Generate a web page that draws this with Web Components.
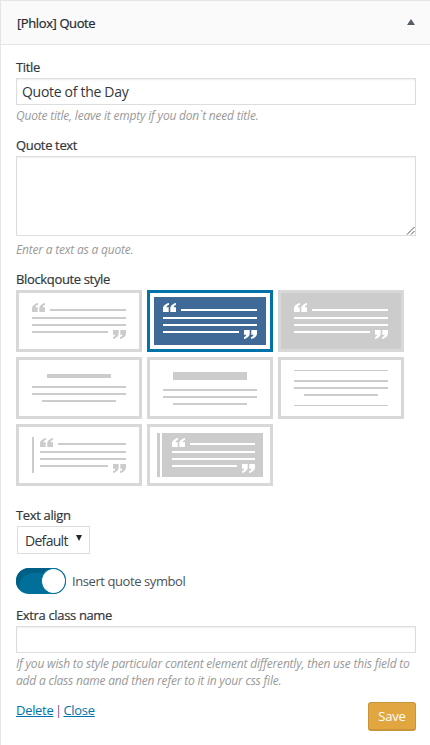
<!DOCTYPE html>
<html>
<head>
<meta charset="utf-8">
<title>[Phlox] Quote</title>
<style>
    html, body { margin: 0; padding: 0; background: #fff; }
    body { font-family: "Open Sans", "Liberation Sans", sans-serif; font-size: 13px; color: #32373c; height: 745px; overflow: hidden; }
</style>
</head>
<body>
<widget-panel heading="[Phlox] Quote">
    <form-field label="Title" hint="Quote title, leave it empty if you don`t need title." gap="12">
        <text-box>Quote of the Day</text-box>
    </form-field>
    <form-field label="Quote text" hint="Enter a text as a quote." hint-gap="5" gap="12">
        <text-box multiline></text-box>
    </form-field>
    <form-field label="Blockqoute style" gap="20">
        <style-picker>
            <style-tile variant="quote"></style-tile>
            <style-tile variant="quote" state="selected"></style-tile>
            <style-tile variant="quote" state="filled"></style-tile>
            <style-tile variant="heading"></style-tile>
            <style-tile variant="heading-large"></style-tile>
            <style-tile variant="ruled"></style-tile>
            <style-tile variant="side"></style-tile>
            <style-tile variant="side-filled"></style-tile>
        </style-picker>
    </form-field>
    <form-field label="Text align" gap="14">
        <select-box>Default</select-box>
    </form-field>
    <toggle-row>Insert quote symbol</toggle-row>
    <form-field label="Extra class name" hint="If you wish to style particular content element differently, then use this field to add a class name and then refer to it in your css file." gap="0">
        <text-box></text-box>
    </form-field>
    <panel-actions></panel-actions>
</widget-panel>

<script>
// 面板外壳
class WidgetPanel extends HTMLElement {
    constructor() {
        super();
        this.attachShadow({ mode: 'open' });
    }

    connectedCallback() {
        this.shadowRoot.innerHTML = `
            <style>
                :host {
                    display: block;
                    border: 1px solid #e5e5e5;
                    border-bottom: 0;
                    border-right: 0;
                    height: 745px;
                    box-sizing: border-box;
                }
                .head {
                    display: flex;
                    align-items: center;
                    justify-content: space-between;
                    box-sizing: border-box;
                    height: 44px;
                    padding: 0 15px 0 16px;
                    background: #fafafa;
                    border-bottom: 1px solid #e5e5e5;
                    font-size: 13px;
                    font-weight: 500;
                    letter-spacing: -0.4px;
                    -webkit-text-stroke: 0.2px #23282d;
                    color: #23282d;
                }
                .head svg { display: block; margin-top: -2px; }
                .body { padding: 13px 14px 0 15px; }
            </style>
            <div class="head">
                <span>${this.getAttribute('heading')}</span>
                <svg width="8" height="6" viewBox="0 0 8 6"><path d="M4 0 8 6H0Z" fill="#555d66"/></svg>
            </div>
            <div class="body"><slot></slot></div>
        `;
    }
}

// 标签 + 控件 + 说明
class FormField extends HTMLElement {
    constructor() {
        super();
        this.attachShadow({ mode: 'open' });
    }

    connectedCallback() {
        const hint = this.getAttribute('hint');
        this.shadowRoot.innerHTML = `
            <style>
                :host {
                    display: block;
                    margin-bottom: ${this.getAttribute('gap') || 0}px;
                }
                label {
                    display: block;
                    font-size: 13px;
                    line-height: 18px;
                    font-weight: 500;
                    letter-spacing: -0.35px;
                    -webkit-text-stroke: 0.2px #32373c;
                    color: #32373c;
                    margin-bottom: 2px;
                }
                p {
                    margin: ${this.getAttribute('hint-gap') || 2}px 0 0;
                    font-size: 12px;
                    line-height: 17px;
                    font-style: italic;
                    letter-spacing: -0.2px;
                    color: #999;
                }
            </style>
            <label>${this.getAttribute('label')}</label>
            <slot></slot>
            ${hint ? `<p>${hint}</p>` : ''}
        `;
    }
}

class TextBox extends HTMLElement {
    constructor() {
        super();
        this.attachShadow({ mode: 'open' });
    }

    connectedCallback() {
        const multi = this.hasAttribute('multiline');
        this.shadowRoot.innerHTML = `
            <style>
                :host {
                    display: block;
                    box-sizing: border-box;
                    height: ${multi ? 80 : 27}px;
                    width: 400px;
                    border: 1px solid #ddd;
                    padding: 0 5px;
                    line-height: 25px;
                    font-size: 14px;
                    letter-spacing: -0.3px;
                    color: #32373c;
                    background: #fff;
                    box-shadow: inset 0 1px 2px rgba(0, 0, 0, 0.07);
                    position: relative;
                }
                svg { position: absolute; right: 0; bottom: 0; }
            </style>
            <slot></slot>
            ${multi ? '<svg width="9" height="9" viewBox="0 0 9 9"><path d="M8.5 1 1 8.5M8.5 5 5 8.5" stroke="#555" fill="none"/></svg>' : ''}
        `;
    }
}

class SelectBox extends HTMLElement {
    constructor() {
        super();
        this.attachShadow({ mode: 'open' });
    }

    connectedCallback() {
        this.shadowRoot.innerHTML = `
            <style>
                :host {
                    display: flex;
                    align-items: center;
                    justify-content: space-between;
                    box-sizing: border-box;
                    width: 73px;
                    height: 28px;
                    margin-left: 1px;
                    padding: 0 7px;
                    border: 1px solid #ddd;
                    font-size: 14px;
                    letter-spacing: -0.7px;
                    color: #32373c;
                    background: #fff;
                }
                svg { margin-top: -4px; }
            </style>
            <slot></slot>
            <svg width="6" height="6" viewBox="0 0 6 6"><path d="M0 0H6L3 6Z" fill="#23282d"/></svg>
        `;
    }
}

// 样式选择网格
class StylePicker extends HTMLElement {
    constructor() {
        super();
        this.attachShadow({ mode: 'open' });
    }

    connectedCallback() {
        this.shadowRoot.innerHTML = `
            <style>
                :host {
                    display: grid;
                    grid-template-columns: repeat(3, 126px);
                    grid-auto-rows: 62px;
                    gap: 5px;
                }
            </style>
            <slot></slot>
        `;
    }
}

const QUOTE_OPEN = 'M6 0C2.5.8 0 3 0 5.5V9H5.7V4.2H3.5C3.6 3 4.6 2.2 6 1.8ZM13 0C9.7.8 7.3 3 7.3 5.5V9H13V4.2H10.8C10.9 3 11.8 2.2 13 1.8Z';

function quoteMarks(x1, y1, x2, y2, fill) {
    return `<path transform="translate(${x1} ${y1})" d="${QUOTE_OPEN}" fill="${fill}"/>` +
        `<path transform="translate(${x2 + 13} ${y2 + 9}) rotate(180)" d="${QUOTE_OPEN}" fill="${fill}"/>`;
}

function bar(x1, x2, y, h, fill) {
    return `<rect x="${x1}" y="${y}" width="${x2 - x1}" height="${h}" fill="${fill}"/>`;
}

function quoteLines(x, lineX, right, endRight, fill) {
    return bar(lineX, right, 19, 2, fill) + bar(x, right, 27, 2, fill) +
        bar(x, right, 34, 2, fill) + bar(x, endRight, 41, 2, fill);
}

const TILE_ART = {
    quote(c) {
        return quoteMarks(16, 13, 97, 40, c) + quoteLines(16, 34, 110, 92, c);
    },
    heading(c) {
        return bar(31, 95, 17, 4, c) + bar(16, 110, 29, 2, c) + bar(16, 110, 36, 2, c) + bar(26, 100, 43, 2, c);
    },
    'heading-large'(c) {
        return bar(26, 100, 15, 8, c) + bar(16, 110, 32, 2, c) + bar(16, 110, 39, 2, c) + bar(26, 100, 46, 2, c);
    },
    ruled(c) {
        return bar(16, 110, 13, 1, c) + bar(16, 110, 23, 2, c) + bar(16, 110, 30, 2, c) +
            bar(26, 100, 37, 2, c) + bar(16, 110, 48, 1, c);
    },
    side(c) {
        return bar(16, 18, 13, 36, c) + quoteMarks(24, 14, 97, 40, c) + quoteLines(24, 42, 110, 92, c);
    },
    'side-filled'() {
        return bar(10, 13, 9, 44, '#ccc') + bar(15, 116, 9, 44, '#ccc') +
            quoteMarks(25, 14, 95, 40, '#fff') + quoteLines(25, 43, 108, 90, '#fff');
    }
};

class StyleTile extends HTMLElement {
    constructor() {
        super();
        this.attachShadow({ mode: 'open' });
    }

    connectedCallback() {
        const state = this.getAttribute('state');
        const variant = this.getAttribute('variant');
        let panel = '';
        let ink = '#ccc';
        if (state === 'selected') {
            panel = '<rect x="7" y="7" width="112" height="48" fill="#3f6a97"/>';
            ink = '#fff';
        } else if (state === 'filled') {
            panel = '<rect x="3" y="3" width="120" height="56" fill="#ccc"/>';
            ink = '#fff';
        }
        this.shadowRoot.innerHTML = `
            <style>
                :host {
                    display: block;
                    position: relative;
                    box-sizing: border-box;
                    border: 3px solid ${state === 'selected' ? '#0073aa' : '#d8d8d8'};
                    background: #fff;
                }
                svg { position: absolute; left: -3px; top: -3px; display: block; }
            </style>
            <svg width="126" height="62" viewBox="0 0 126 62">${panel}${TILE_ART[variant](ink)}</svg>
        `;
    }
}

class ToggleRow extends HTMLElement {
    constructor() {
        super();
        this.attachShadow({ mode: 'open' });
    }

    connectedCallback() {
        this.shadowRoot.innerHTML = `
            <style>
                :host {
                    display: flex;
                    align-items: center;
                    gap: 6px;
                    font-size: 13px;
                    letter-spacing: -0.42px;
                    color: #4b5157;
                    margin-bottom: 12px;
                }
                .track {
                    position: relative;
                    box-sizing: border-box;
                    width: 50px;
                    height: 26px;
                    border-radius: 13px;
                    background: #00709b;
                    box-shadow: inset 4px 6px 0 -1px #005f85;
                }
                .knob {
                    position: absolute;
                    right: 0;
                    top: 0;
                    box-sizing: border-box;
                    width: 25px;
                    height: 26px;
                    border-radius: 50%;
                    background: #fff;
                    border: 1px solid #00709b;
                }
            </style>
            <span class="track"><span class="knob"></span></span>
            <slot></slot>
        `;
    }
}

class PanelActions extends HTMLElement {
    constructor() {
        super();
        this.attachShadow({ mode: 'open' });
    }

    connectedCallback() {
        this.shadowRoot.innerHTML = `
            <style>
                :host {
                    display: flex;
                    justify-content: space-between;
                    align-items: flex-start;
                    width: 400px;
                    margin-top: 12px;
                    font-size: 13px;
                    line-height: 18px;
                    letter-spacing: -0.3px;
                    color: #7a4a87;
                }
                span { word-spacing: -1.5px; }
                a { color: #0073aa; text-decoration: underline; }
                button {
                    box-sizing: border-box;
                    width: 48px;
                    height: 29px;
                    margin-top: 1px;
                    padding: 0;
                    border: 1px solid #c8953a;
                    border-bottom-width: 2px;
                    border-radius: 3px;
                    background: #e1a63f;
                    color: #fff;
                    font: 13px "Open Sans", "Liberation Sans", sans-serif;
                    letter-spacing: -0.2px;
                }
            </style>
            <span><a href="#">Delete</a> | <a href="#">Close</a></span>
            <button type="button">Save</button>
        `;
    }
}

customElements.define('widget-panel', WidgetPanel);
customElements.define('form-field', FormField);
customElements.define('text-box', TextBox);
customElements.define('select-box', SelectBox);
customElements.define('style-picker', StylePicker);
customElements.define('style-tile', StyleTile);
customElements.define('toggle-row', ToggleRow);
customElements.define('panel-actions', PanelActions);
</script>
</body>
</html>
